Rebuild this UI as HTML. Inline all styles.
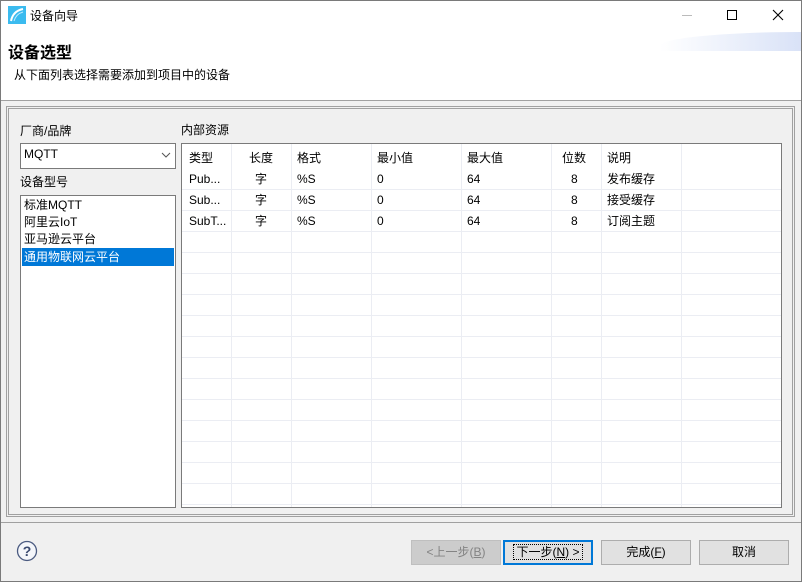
<!DOCTYPE html><html><head><meta charset="utf-8"><style>
*{margin:0;padding:0;box-sizing:border-box}
body{width:802px;height:582px;position:relative;background:#f0f0f0;font-family:"Liberation Sans","Noto Sans CJK SC",sans-serif;font-size:12px;color:#000;overflow:hidden}
.a{position:absolute}
.t{white-space:nowrap}
</style></head><body>
<div class="a" style="left:0;top:0;width:802px;height:582px;border:1px solid #7a7a7a"></div>
<div class="a" style="left:1px;top:1px;width:800px;height:99px;background:#fff"></div>
<div class="a" style="left:660px;top:32px;width:141px;height:19px;background:linear-gradient(90deg,rgba(220,228,248,0),#d9e2f7);border-radius:140px 0 0 0/14px 0 0 0"></div>
<svg class="a" style="left:8px;top:6px" width="18" height="18"><rect width="18" height="18" fill="#3bbbef"/><path d="M3 15 Q5 5 15 3" stroke="#fff" stroke-width="2" fill="none"/><path d="M6 15 Q8 8 15 6" stroke="#bfeaff" stroke-width="1" fill="none"/></svg>
<div class="a t" style="left:30px;top:7px;font-size:12px">设备向导</div>
<div class="a" style="left:682px;top:15px;width:10px;height:1px;background:#bbb"></div>
<div class="a" style="left:727px;top:10px;width:10px;height:10px;border:1px solid #000"></div>
<svg class="a" style="left:772px;top:9px" width="12" height="12"><path d="M1 1L11 11M11 1L1 11" stroke="#000" stroke-width="1.1"/></svg>
<div class="a t" style="left:8px;top:39px;font-size:16px;font-weight:bold">设备选型</div>
<div class="a t" style="left:14px;top:66px">从下面列表选择需要添加到项目中的设备</div>
<div class="a" style="left:1px;top:100px;width:800px;height:1px;background:#a0a0a0"></div>
<div class="a" style="left:6px;top:106px;width:789px;height:411px;border:1px solid #a0a0a0"></div>
<div class="a" style="left:8px;top:108px;width:785px;height:407px;border:1px solid #a0a0a0"></div>
<div class="a t" style="left:20px;top:122px">厂商/品牌</div>
<div class="a" style="left:20px;top:143px;width:156px;height:26px;background:#fff;border:1px solid #7a7a7a"></div>
<div class="a t" style="left:24px;top:147px">MQTT</div>
<svg class="a" style="left:161px;top:152px" width="10" height="7"><path d="M1 1L5 5L9 1" stroke="#555" fill="none"/></svg>
<div class="a t" style="left:20px;top:173px">设备型号</div>
<div class="a" style="left:20px;top:195px;width:156px;height:313px;background:#fff;border:1px solid #7a7a7a"></div>
<div class="a t" style="left:24px;top:197px;line-height:17px">标准MQTT<br>阿里云IoT<br>亚马逊云平台</div>
<div class="a" style="left:22px;top:248px;width:152px;height:18px;background:#0078d7"></div>
<div class="a t" style="left:24px;top:248px;color:#fff">通用物联网云平台</div>
<div class="a t" style="left:181px;top:121px">内部资源</div>
<div class="a" style="left:181px;top:143px;width:601px;height:365px;background:#fff;border:1px solid #7a7a7a"></div>
<svg class="a" style="left:182px;top:144px" width="599" height="363">
<g stroke="#ebedf3">
<line x1="0" y1="45.5" x2="599" y2="45.5"/><line x1="0" y1="66.5" x2="599" y2="66.5"/><line x1="0" y1="87.5" x2="599" y2="87.5"/><line x1="0" y1="108.5" x2="599" y2="108.5"/><line x1="0" y1="129.5" x2="599" y2="129.5"/><line x1="0" y1="150.5" x2="599" y2="150.5"/><line x1="0" y1="171.5" x2="599" y2="171.5"/><line x1="0" y1="192.5" x2="599" y2="192.5"/><line x1="0" y1="213.5" x2="599" y2="213.5"/><line x1="0" y1="234.5" x2="599" y2="234.5"/><line x1="0" y1="255.5" x2="599" y2="255.5"/><line x1="0" y1="276.5" x2="599" y2="276.5"/><line x1="0" y1="297.5" x2="599" y2="297.5"/><line x1="0" y1="318.5" x2="599" y2="318.5"/><line x1="0" y1="339.5" x2="599" y2="339.5"/><line x1="0" y1="360.5" x2="599" y2="360.5"/>
<line x1="49.5" y1="0" x2="49.5" y2="363"/><line x1="109.5" y1="0" x2="109.5" y2="363"/><line x1="189.5" y1="0" x2="189.5" y2="363"/><line x1="279.5" y1="0" x2="279.5" y2="363"/><line x1="369.5" y1="0" x2="369.5" y2="363"/><line x1="419.5" y1="0" x2="419.5" y2="363"/><line x1="499.5" y1="0" x2="499.5" y2="363"/>
</g></svg>
<div class="a t" style="left:189px;top:149px">类型</div><div class="a t" style="left:249px;top:149px">长度</div><div class="a t" style="left:297px;top:149px">格式</div><div class="a t" style="left:377px;top:149px">最小值</div><div class="a t" style="left:467px;top:149px">最大值</div><div class="a t" style="left:562px;top:149px">位数</div><div class="a t" style="left:607px;top:149px">说明</div>
<div class="a t" style="left:189px;top:169px;line-height:21px">Pub...<br>Sub...<br>SubT...</div>
<div class="a t" style="left:255px;top:169px;line-height:21px">字<br>字<br>字</div>
<div class="a t" style="left:297px;top:169px;line-height:21px">%S<br>%S<br>%S</div>
<div class="a t" style="left:377px;top:169px;line-height:21px">0<br>0<br>0</div>
<div class="a t" style="left:467px;top:169px;line-height:21px">64<br>64<br>64</div>
<div class="a t" style="left:571px;top:169px;line-height:21px">8<br>8<br>8</div>
<div class="a t" style="left:607px;top:169px;line-height:21px">发布缓存<br>接受缓存<br>订阅主题</div>
<div class="a" style="left:1px;top:522px;width:800px;height:1px;background:#a0a0a0"></div>
<svg class="a" style="left:16px;top:540px" width="22" height="22"><circle cx="11" cy="11" r="9.5" fill="#f4f6fa" stroke="#4a5a80" stroke-width="1.3"/><text x="11" y="16" text-anchor="middle" font-family="Liberation Sans" font-weight="bold" font-size="14" fill="#3a4a70">?</text></svg>
<div class="a t" style="left:411px;top:540px;width:90px;height:25px;background:#ccc;border:1px solid #bfbfbf;color:#838383;text-align:center;line-height:23px">&lt;上一步(<u>B</u>)</div>
<div class="a t" style="left:503px;top:540px;width:90px;height:25px;background:#e1e1e1;border:2px solid #0078d7;text-align:center;line-height:21px"><span style="outline:1px dotted #000;padding:0 2px">下一步(<u>N</u>) &gt;</span></div>
<div class="a t" style="left:601px;top:540px;width:90px;height:25px;background:#e1e1e1;border:1px solid #adadad;text-align:center;line-height:23px">完成(<u>F</u>)</div>
<div class="a t" style="left:699px;top:540px;width:90px;height:25px;background:#e1e1e1;border:1px solid #adadad;text-align:center;line-height:23px">取消</div>
</body></html>
